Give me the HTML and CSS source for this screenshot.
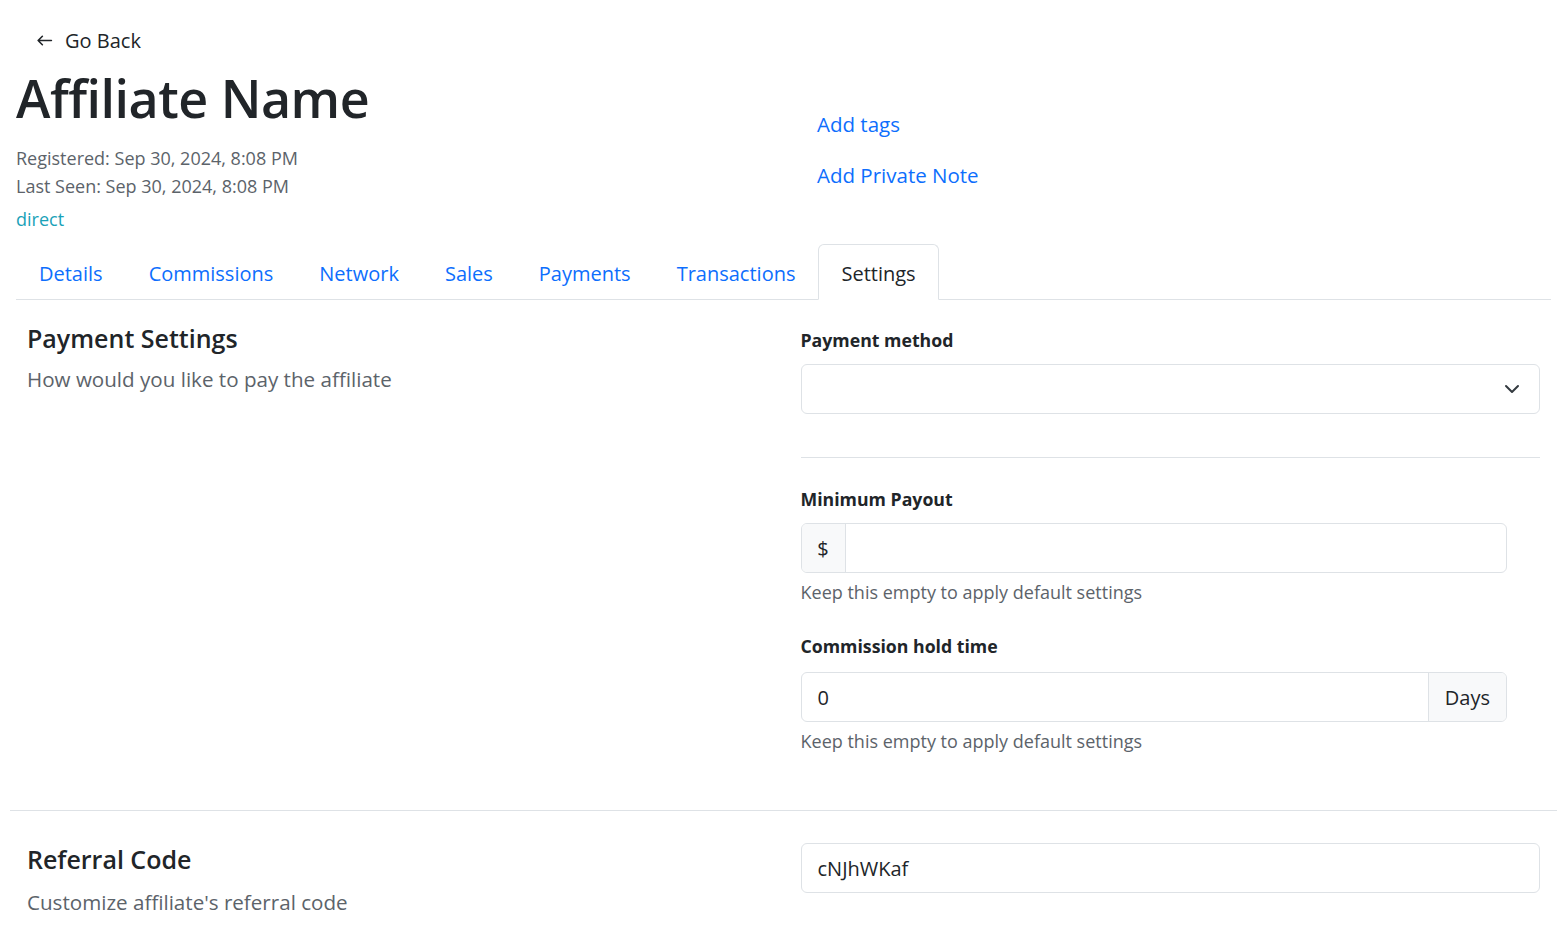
FILE: index.html
```html
<!DOCTYPE html>
<html lang="en">
<head>
<meta charset="utf-8">
<title>Affiliate Name</title>
<link rel="stylesheet" href="styles.css">
</head>
<body>
<div class="page">
  <a class="back" href="#">
    <svg class="back-icon" viewBox="0 0 16 16" width="17" height="17"><path fill="none" stroke="currentColor" stroke-width="1.5" stroke-linecap="round" stroke-linejoin="round" d="M14.5 8H2M6 4 2 8l4 4"/></svg>
    <span>Go Back</span>
  </a>

  <div class="header">
    <div class="header-main">
      <h1 class="title">Affiliate Name</h1>
      <div class="meta">Registered: Sep 30, 2024, 8:08 PM</div>
      <div class="meta">Last Seen: Sep 30, 2024, 8:08 PM</div>
      <div class="source">direct</div>
    </div>
    <div class="header-side">
      <a class="side-link" href="#">Add tags</a>
      <a class="side-link" href="#">Add Private Note</a>
    </div>
  </div>

  <ul class="tabs">
    <li><a class="tab" href="#">Details</a></li>
    <li><a class="tab" href="#">Commissions</a></li>
    <li><a class="tab" href="#">Network</a></li>
    <li><a class="tab" href="#">Sales</a></li>
    <li><a class="tab" href="#">Payments</a></li>
    <li><a class="tab" href="#">Transactions</a></li>
    <li><a class="tab active" href="#">Settings</a></li>
  </ul>

  <div class="section">
    <div class="col">
      <h2 class="sec-title">Payment Settings</h2>
      <p class="sec-sub">How would you like to pay the affiliate</p>
    </div>
    <div class="col">
      <label class="label">Payment method</label>
      <div class="select">
        <svg class="chev" viewBox="0 0 16 16" width="16" height="16"><path fill="none" stroke="#343a40" stroke-linecap="round" stroke-linejoin="round" stroke-width="2" d="m2 5 6 6 6-6"/></svg>
      </div>
      <div class="divider"></div>

      <label class="label">Minimum Payout</label>
      <div class="group">
        <span class="addon addon-left">$</span>
        <span class="input"></span>
      </div>
      <div class="help">Keep this empty to apply default settings</div>

      <label class="label label-2">Commission hold time</label>
      <div class="group group-2">
        <span class="input">0</span>
        <span class="addon addon-right">Days</span>
      </div>
      <div class="help">Keep this empty to apply default settings</div>
    </div>
  </div>

  <div class="rule"></div>

  <div class="section section-2">
    <div class="col">
      <h2 class="sec-title">Referral Code</h2>
      <p class="sec-sub">Customize affiliate's referral code</p>
    </div>
    <div class="col">
      <div class="field">cNJhWKaf</div>
    </div>
  </div>
</div>
</body>
</html>
```

FILE: styles.css
```css
* { box-sizing: border-box; }

body {
  margin: 0;
  font-family: "Open Sans", "Noto Sans", sans-serif;
  color: #212529;
  background: #fff;
}

a { text-decoration: none; }

.page {
  padding: 0 2px 0 10px;
}

.back {
  display: flex;
  align-items: center;
  gap: 12px;
  height: 28px;
  margin: 26px 0 0 26px;
  color: #212529;
  font-size: 20px;
}
.back-icon { display: block; }

.header {
  display: grid;
  grid-template-columns: 801px 1fr;
  padding-left: 6px;
}

.title {
  margin: 14px 0 16px;
  font-size: 52px;
  font-weight: 600;
  line-height: 60px;
  letter-spacing: -0.5px;
}

.meta {
  font-size: 18px;
  line-height: 28px;
  color: #5c636a;
}

.source {
  margin-top: 5px;
  font-size: 18px;
  line-height: 28px;
  color: #1aa2b8;
}

.header-side {
  display: flex;
  flex-direction: column;
  padding-top: 56px;
  gap: 23px;
}

.side-link {
  font-size: 20.5px;
  line-height: 28px;
  color: #0d6efd;
  align-self: flex-start;
}

.tabs {
  list-style: none;
  display: flex;
  margin: 11px 6px 0;
  padding: 0;
  border-bottom: 1px solid #dee2e6;
}

.tab {
  display: block;
  padding: 0 22px;
  height: 56px;
  line-height: 57px;
  font-size: 20px;
  color: #0d6efd;
  border: 1px solid transparent;
  border-top-left-radius: 6px;
  border-top-right-radius: 6px;
  margin-bottom: -1px;
}

.tab:first-child { padding-left: 22px; }

.tab.active {
  color: #212529;
  background: #fff;
  border-color: #dee2e6 #dee2e6 #fff;
}

.section {
  display: grid;
  grid-template-columns: 1fr 1fr;
  padding-top: 22px;
}

.col {
  padding: 0 17px;
  display: flex;
  flex-direction: column;
  align-items: stretch;
}

.sec-title {
  margin: 0;
  font-size: 25px;
  font-weight: 600;
  line-height: 32px;
}

.sec-sub {
  margin: 10px 0 0;
  font-size: 20.6px;
  line-height: 30px;
  color: #5c636a;
}

.label {
  display: block;
  font-size: 17.7px;
  font-weight: 700;
  line-height: 28px;
  margin-top: 4px;
}

.select {
  position: relative;
  height: 50px;
  margin-top: 10px;
  border: 1px solid #dee2e6;
  border-radius: 6px;
}

.chev {
  position: absolute;
  right: 19px;
  top: 16px;
}

.divider {
  height: 1px;
  background: #dee2e6;
  margin: 43px 0 23px;
}

.group {
  display: flex;
  height: 50px;
  margin-top: 10px;
  margin-right: 33px;
  border: 1px solid #dee2e6;
  border-radius: 6px;
  overflow: hidden;
}

.group-2 { margin-top: 12px; }

.addon {
  display: flex;
  align-items: center;
  background: #f8f9fa;
  font-size: 20px;
  color: #212529;
}
.addon-left {
  width: 44px;
  justify-content: center;
  border-right: 1px solid #dee2e6;
}
.addon-right {
  padding: 0 16px;
  border-left: 1px solid #dee2e6;
}

.input {
  flex: 1;
  display: flex;
  align-items: center;
  padding: 0 16px;
  font-size: 20px;
}

.help {
  margin-top: 5px;
  font-size: 18px;
  line-height: 28px;
  color: #5c636a;
}

.label-2 { margin-top: 26px; }

.rule {
  height: 1px;
  background: #dee2e6;
  margin-top: 55px;
}

.section-2 { padding-top: 32px; }

.section-2 .sec-title { margin-top: 0; }
.section-2 .sec-sub { margin-top: 12px; }

.field {
  height: 50px;
  display: flex;
  align-items: center;
  padding: 0 16px;
  border: 1px solid #dee2e6;
  border-radius: 6px;
  font-size: 20px;
}
```
